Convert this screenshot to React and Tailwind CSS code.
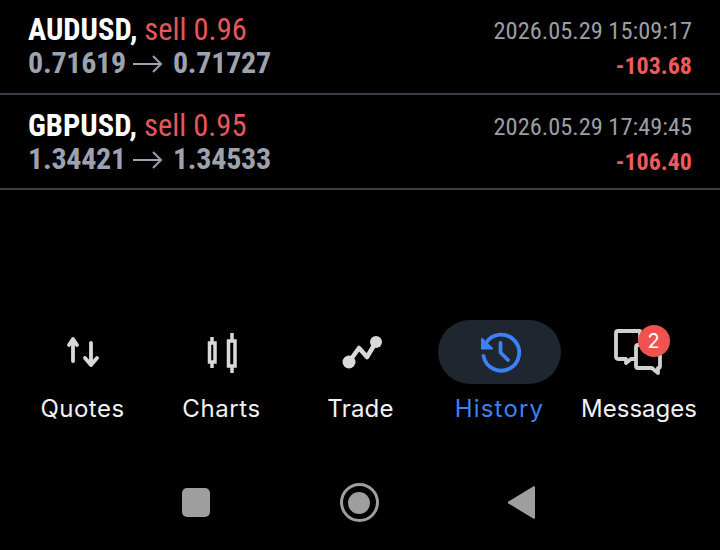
import React from 'react';

const TRADES = [
  { symbol: 'AUDUSD', side: 'sell 0.96', open: '0.71619', close: '0.71727', time: '2026.05.29 15:09:17', profit: '-103.68' },
  { symbol: 'GBPUSD', side: 'sell 0.95', open: '1.34421', close: '1.34533', time: '2026.05.29 17:49:45', profit: '-106.40' },
];

const QuotesIcon = () => (
  <svg width="44" height="44" viewBox="0 0 44 44" fill="none" stroke="#d9d9d9" strokeWidth="3.8" strokeLinecap="round" strokeLinejoin="round">
    <path d="M12 31V10M8 15l4-6 4 6" />
    <path d="M30 13v22M24 28l6 7 6-7" />
  </svg>
);

const ChartsIcon = () => (
  <svg width="44" height="44" viewBox="0 0 44 44" fill="none" stroke="#d9d9d9" strokeWidth="3.5">
    <rect x="9.500" y="13" width="5.500" height="19" />
    <path d="M12 7v6M12 32v6" />
    <rect x="28.500" y="11" width="6.500" height="25" />
    <path d="M32 3v8M32 36v7" />
  </svg>
);

const TradeIcon = () => (
  <svg width="44" height="44" viewBox="0 0 44 44" fill="none">
    <path d="M10 32 20 18 28 27 37 12" stroke="#d9d9d9" strokeWidth="4.500" strokeLinejoin="round" />
    <circle cx="10" cy="32" r="6.500" fill="#d9d9d9" />
    <circle cx="37" cy="12" r="6" fill="#d9d9d9" />
  </svg>
);

const HistoryIcon = () => (
  <svg width="44" height="44" viewBox="0 0 44 44" fill="none" stroke="#3b82f6" strokeWidth="3.800" strokeLinecap="round" strokeLinejoin="round">
    <path d="M8 13a18 18 0 1 1-2.500 13" />
    <path d="M4 9v9.500h10z" fill="#3b82f6" strokeWidth="2" />
    <path d="M22.500 13v9.500L30 30" />
  </svg>
);

const MessagesIcon = () => (
  <svg width="52" height="52" viewBox="0 0 52 52" fill="none" stroke="#d0d0d0" strokeWidth="3.800" strokeLinejoin="round">
    <path d="M5 5h22v28H18l-5 4v-4H5a2 2 0 0 1-2-2V7a2 2 0 0 1 2-2z" />
    <path d="M25 19h20a2 2 0 0 1 2 2v19a2 2 0 0 1-2 2v5l-6-5H25a2 2 0 0 1-2-2V21a2 2 0 0 1 2-2z" fill="#000" />
  </svg>
);

const NavItem = ({ label, active, labelClass, children }) => (
  <div className="flex flex-col items-center w-[139px] shrink-0">
    <div className={`flex items-center justify-center w-[123px] h-[64px] rounded-full ${active ? 'bg-[#1f2630]' : ''}`}>
      {children}
    </div>
    <span className={`mt-[9px] text-[24px] leading-[32px] font-['Inter',sans-serif] ${labelClass} ${active ? 'text-[#3b82f6]' : 'text-[#f2f2f2]'}`}>
      {label}
    </span>
  </div>
);

const LongArrow = () => (
  <svg width="30" height="20" viewBox="0 0 30 20" fill="none" stroke="#9ca3af" strokeWidth="2" className="ml-[7px] mr-[10px] mt-[1px]">
    <path d="M0 10h28M20 2l8 8-8 8" />
  </svg>
);

const TradeRow = ({ trade }) => (
  <div className="flex justify-between h-[95px] px-[28px] pt-[10px] last:pt-[11px] border-b-2 border-[#3a3f47]">
    <div className="flex flex-col">
      <div className="text-[30.5px] leading-[40px] whitespace-nowrap [font-stretch:75%]">
        <span className="font-bold text-white">{trade.symbol},</span>
        <span className="text-[#e5575a]"> {trade.side}</span>
      </div>
      <div className="flex items-center -mt-[2px] text-[30px] leading-[30px] tracking-[-0.25px] font-bold text-[#9ca3af] whitespace-nowrap [font-stretch:75%]">
        {trade.open}
        <LongArrow />
        {trade.close}
      </div>
    </div>
    <div className="flex flex-col items-end pt-[7px]">
      <div className="text-[24.4px] leading-[28px] text-[#9b9ea3] whitespace-nowrap [font-stretch:75%]">{trade.time}</div>
      <div className="mt-[7px] text-[24px] leading-[28px] font-bold text-[#ef5a5d] whitespace-nowrap [font-stretch:75%]">{trade.profit}</div>
    </div>
  </div>
);

export default function App() {
  return (
    <div className="w-[720px] h-[550px] bg-black overflow-hidden flex flex-col font-['Roboto',sans-serif]">
      <div className="h-[190px] shrink-0">
        {TRADES.map((t) => <TradeRow key={t.symbol} trade={t} />)}
      </div>

      <div className="flex mt-[130px] pl-[13px]">
        <NavItem label="Quotes" labelClass="tracking-[0.5px]"><QuotesIcon /></NavItem>
        <NavItem label="Charts" labelClass="tracking-[0.6px]"><ChartsIcon /></NavItem>
        <NavItem label="Trade" labelClass="tracking-[0.2px]"><TradeIcon /></NavItem>
        <NavItem label="History" labelClass="tracking-[1.2px]" active><HistoryIcon /></NavItem>
        <NavItem label="Messages" labelClass="tracking-[0px] ml-[1px]">
          <div className="relative flex">
            <MessagesIcon />
            <span className="absolute -top-[1px] -right-[5px] w-[32px] h-[32px] rounded-full bg-[#ef5350] text-white text-[20px] leading-[32px] text-center font-['Inter',sans-serif]">2</span>
          </div>
        </NavItem>
      </div>

      <div className="flex items-center justify-between mt-[58px] pl-[182px] pr-[185px]">
        <div className="w-[28px] h-[29px] rounded-[5px] bg-[#9e9e9e]" />
        <div className="w-[39px] h-[39px] rounded-full border-[3px] border-[#9e9e9e] flex items-center justify-center">
          <div className="w-[22px] h-[22px] rounded-full bg-[#9e9e9e]" />
        </div>
        <svg width="27" height="33" viewBox="0 0 27 33"><path d="M27 1V32L26 33 0.500 17.500a1 1 0 0 1 0-2L26 0z" fill="#9e9e9e" /></svg>
      </div>
    </div>
  );
}
